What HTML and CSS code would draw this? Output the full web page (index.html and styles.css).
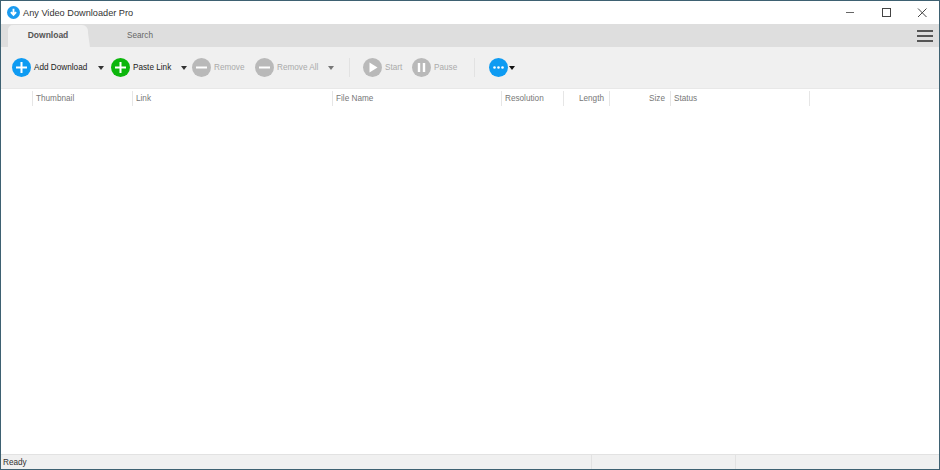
FILE: index.html
```html
<!DOCTYPE html>
<html>
<head>
  <title>Any Video Downloader Pro</title>
  <link rel="stylesheet" href="styles.css">
</head>
<body>

<div class="window">

  <!-- Title bar -->
  <div class="titlebar">
    <svg class="app-icon" width="13" height="13" viewBox="0 0 14 14">
      <circle cx="7" cy="7" r="7" fill="#1a9bf0"/>
      <path d="M7 3v6M4.2 6.6L7 9.6l2.8-3" fill="none" stroke="#fff" stroke-width="2"/>
    </svg>
    <span class="app-title">Any Video Downloader Pro</span>
    <div class="win-buttons">
      <svg width="12" height="12" viewBox="0 0 12 12"><path d="M2 5.5h8" stroke="#666" stroke-width="1"/></svg>
      <svg width="12" height="12" viewBox="0 0 12 12"><rect x="2.5" y="1.5" width="8" height="8" fill="none" stroke="#444" stroke-width="1"/></svg>
      <svg width="12" height="12" viewBox="0 0 12 12"><path d="M2 1.5l8.5 8.5M10.5 1.5L2 10" stroke="#444" stroke-width="1"/></svg>
    </div>
  </div>

  <!-- Tabs -->
  <div class="tabbar">
    <div class="tab active">Download</div>
    <div class="tab">Search</div>
    <div class="menu-btn"><span></span><span></span><span></span></div>
  </div>

  <!-- Toolbar -->
  <div class="toolbar">
    <div class="tool wide-add">
      <svg class="ico" width="19" height="19" viewBox="0 0 19 19"><circle cx="9.5" cy="9.5" r="9.5" fill="#0e9bf2"/><path d="M9.5 4v11M4 9.5h11" stroke="#fff" stroke-width="2"/></svg>
      <span>Add Download</span>
      <i class="caret"></i>
    </div>
    <div class="tool wide-paste">
      <svg class="ico" width="19" height="19" viewBox="0 0 19 19"><circle cx="9.5" cy="9.5" r="9.5" fill="#0cb60c"/><path d="M9.5 4v11M4 9.5h11" stroke="#fff" stroke-width="2"/></svg>
      <span>Paste Link</span>
      <i class="caret"></i>
    </div>
    <div class="tool off wide-remove">
      <svg class="ico" width="19" height="19" viewBox="0 0 19 19"><circle cx="9.5" cy="9.5" r="9.5" fill="#b9b9b9"/><path d="M4 9.5h11" stroke="#fff" stroke-width="2"/></svg>
      <span>Remove</span>
    </div>
    <div class="tool off wide-removeall">
      <svg class="ico" width="19" height="19" viewBox="0 0 19 19"><circle cx="9.5" cy="9.5" r="9.5" fill="#b9b9b9"/><path d="M4 9.5h11" stroke="#fff" stroke-width="2"/></svg>
      <span>Remove All</span>
      <i class="caret grey"></i>
    </div>
    <div class="sep sep-one"></div>
    <div class="tool off wide-start">
      <svg class="ico" width="19" height="19" viewBox="0 0 19 19"><circle cx="9.5" cy="9.5" r="9.5" fill="#b9b9b9"/><path d="M6.5 4.5v10l8-5z" fill="#fff"/></svg>
      <span>Start</span>
    </div>
    <div class="tool off wide-pause">
      <svg class="ico" width="19" height="19" viewBox="0 0 19 19"><circle cx="9.5" cy="9.5" r="9.5" fill="#b9b9b9"/><path d="M7 5v9M12 5v9" stroke="#fff" stroke-width="2.4"/></svg>
      <span>Pause</span>
    </div>
    <div class="sep sep-two"></div>
    <div class="tool more">
      <svg class="ico" width="19" height="19" viewBox="0 0 19 19"><circle cx="9.5" cy="9.5" r="9.5" fill="#0e9bf2"/><circle cx="5.5" cy="9.5" r="1.3" fill="#fff"/><circle cx="9.5" cy="9.5" r="1.3" fill="#fff"/><circle cx="13.5" cy="9.5" r="1.3" fill="#fff"/></svg>
      <i class="caret black"></i>
    </div>
  </div>

  <!-- Download list -->
  <div class="list">
    <div class="list-head">
      <div class="col c-check"></div>
      <div class="col c-thumb">Thumbnail</div>
      <div class="col c-link">Link</div>
      <div class="col c-file">File Name</div>
      <div class="col c-res">Resolution</div>
      <div class="col c-len right">Length</div>
      <div class="col c-size right">Size</div>
      <div class="col c-status">Status</div>
    </div>
  </div>

  <!-- Status bar -->
  <div class="statusbar">
    <div class="st st-main">Ready</div>
    <div class="st st-mid"></div>
    <div class="st st-end"></div>
  </div>

</div>

</body>
</html>
```

FILE: styles.css
```css
/* Window frame */
html, body {
  margin: 0;
  height: 100%;
}
body {
  background-color: white;
  font-family: "Liberation Sans", Tahoma, sans-serif;
  font-size: 8.2px;
  color: #222;
}
.window {
  height: 470px;
  box-sizing: border-box;
  border: 1px solid #3e6172;
  display: flex;
  flex-direction: column;
  overflow: hidden;
}

/* Title bar */
.titlebar {
  height: 23px;
  display: flex;
  align-items: center;
  padding-left: 6px;
  background-color: white;
}
.app-icon {
  margin-right: 3px;
}
.app-title {
  font-size: 9.2px;
  color: #333;
}
.win-buttons {
  margin-left: auto;
  display: flex;
  align-items: center;
  gap: 24px;
  padding-right: 11px;
}

/* Tabs */
.tabbar {
  height: 23px;
  display: flex;
  align-items: flex-end;
  padding-left: 7px;
  background-color: #dedede;
}
.tab {
  width: 104px;
  height: 22px;
  line-height: 21px;
  text-align: center;
  color: #666;
}
.tab.active {
  position: relative;
  width: 80px;
  background-color: #f0f0f0;
  border-radius: 5px 6px 0 0;
  color: #555;
  font-weight: bold;
  font-size: 8.5px;
}
/* slanted right edge of the open tab */
.tab.active::after {
  content: "";
  position: absolute;
  right: -1px;
  bottom: 0;
  width: 3px;
  height: 14px;
  background-color: #f0f0f0;
  transform: skewX(8deg);
}
.menu-btn {
  margin-left: auto;
  align-self: center;
  width: 16px;
  margin-right: 6px;
  display: flex;
  flex-direction: column;
  gap: 3px;
}
.menu-btn span {
  height: 2px;
  background-color: #555;
}

/* Toolbar */
.toolbar {
  height: 42px;
  display: flex;
  align-items: center;
  padding-left: 11px;
  background-color: #f0f0f0;
  border-bottom: 1px solid #e8e8e8;
  box-sizing: border-box;
}
.tool {
  display: flex;
  align-items: center;
  color: #222;
}
.tool.off {
  color: #aaa;
}
.ico {
  margin-right: 3px;
  flex: none;
}
.wide-add { width: 99px; }
.wide-paste { width: 81px; }
.wide-remove { width: 63px; }
.wide-removeall { width: 84px; }
.wide-start { width: 49px; }
.wide-pause { width: 62px; }
.more .ico { margin-right: 1px; }
.caret {
  margin-left: auto;
  margin-right: 5px;
  width: 0;
  height: 0;
  border-left: 3.5px solid transparent;
  border-right: 3.5px solid transparent;
  border-top: 4px solid #333;
}
.wide-add .caret { margin-right: 7px; }
.caret.grey { border-top-color: #777; }
.caret.black {
  margin-left: 0;
  border-top-color: #111;
}
.sep {
  width: 1px;
  height: 19px;
  background-color: #e2e2e2;
}
.sep-one { margin: 0 13px 0 10px; }
.sep-two { margin: 0 14px 0 0; }

/* Download list */
.list {
  flex: 1;
  background-color: white;
}
.list-head {
  display: flex;
  height: 15px;
  margin-top: 2px;
  align-items: stretch;
  color: #777;
}
.col {
  box-sizing: border-box;
  padding: 0 5px 0 3px;
  line-height: 15px;
  border-right: 1px solid #e6e6e6;
  white-space: nowrap;
}
.col.right { text-align: right; }
.c-check { width: 32px; }
.c-thumb { width: 100px; }
.c-link { width: 200px; }
.c-file { width: 169px; }
.c-res { width: 62px; }
.c-len { width: 46px; }
.c-size { width: 61px; }
.c-status { width: 139px; }

/* Status bar */
.statusbar {
  height: 15px;
  box-sizing: border-box;
  display: flex;
  background-color: #f0f0f0;
  border-top: 1px solid #e2e2e2;
}
.st {
  box-sizing: border-box;
  line-height: 15px;
  padding-left: 2px;
  color: #333;
}
.st-main { width: 590px; }
.st-mid {
  width: 144px;
  border-left: 1px solid #e2e2e2;
}
.st-end {
  flex: 1;
  border-left: 1px solid #e2e2e2;
}
```
